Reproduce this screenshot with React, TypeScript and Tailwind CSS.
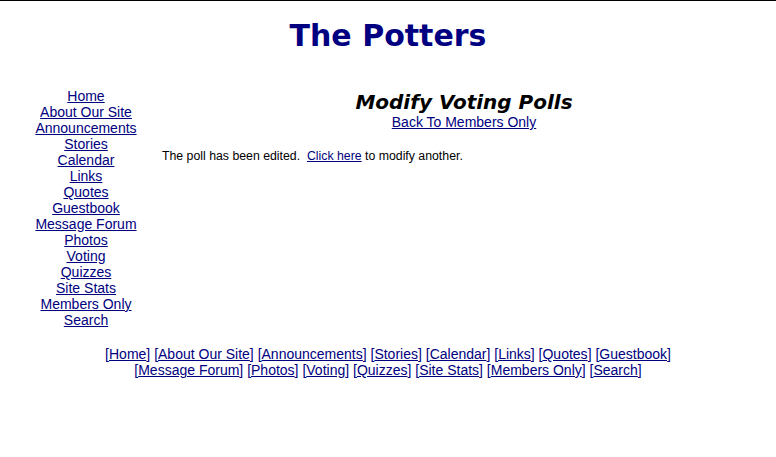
const navItems = [
  'Home',
  'About Our Site',
  'Announcements',
  'Stories',
  'Calendar',
  'Links',
  'Quotes',
  'Guestbook',
  'Message Forum',
  'Photos',
  'Voting',
  'Quizzes',
  'Site Stats',
  'Members Only',
  'Search',
];

const footerRows = [navItems.slice(0, 8), navItems.slice(8)];

export default function App() {
  return (
    <div className="min-h-[457px] w-[776px] border-t border-black bg-white font-['Liberation_Sans',Arial,sans-serif] text-black">
      <h1 className="pt-[17px] text-center font-['DejaVu_Sans',Verdana,sans-serif] text-[30px] leading-[36px] font-bold text-[#000080]">
        The Potters
      </h1>

      <div className="mt-[34px] flex items-start">
        {/* side navigation */}
        <nav className="ml-[20px] flex w-[132px] flex-col items-center text-[14px] leading-[16px]">
          {navItems.map((item) => (
            <a key={item} href="#" className="text-[#000080] underline">
              {item}
            </a>
          ))}
        </nav>

        <main className="flex-1 pt-[2px]">
          <div className="text-center">
            <h2 className="font-['DejaVu_Sans',Verdana,sans-serif] text-[20px] leading-[24px] font-bold italic">
              Modify Voting Polls
            </h2>
            <a href="#" className="block text-[14px] leading-[16px] text-[#000080] underline">
              Back To Members Only
            </a>
          </div>
          <p className="mt-[19px] pl-[10px] text-[12.3px] leading-[15px]">
            The poll has been edited.&nbsp;{' '}
            <a href="#" className="text-[#000080] underline">
              Click here
            </a>{' '}
            to modify another.
          </p>
        </main>
      </div>

      <div className="mt-[18px] text-center text-[14px] leading-[16px] text-[#000080]">
        {footerRows.map((row, i) => (
          <div key={i}>
            {row.map((item, j) => (
              <span key={item}>
                [<a href="#" className="underline">{item}</a>]{j < row.length - 1 ? ' ' : ''}
              </span>
            ))}
          </div>
        ))}
      </div>
    </div>
  );
}
